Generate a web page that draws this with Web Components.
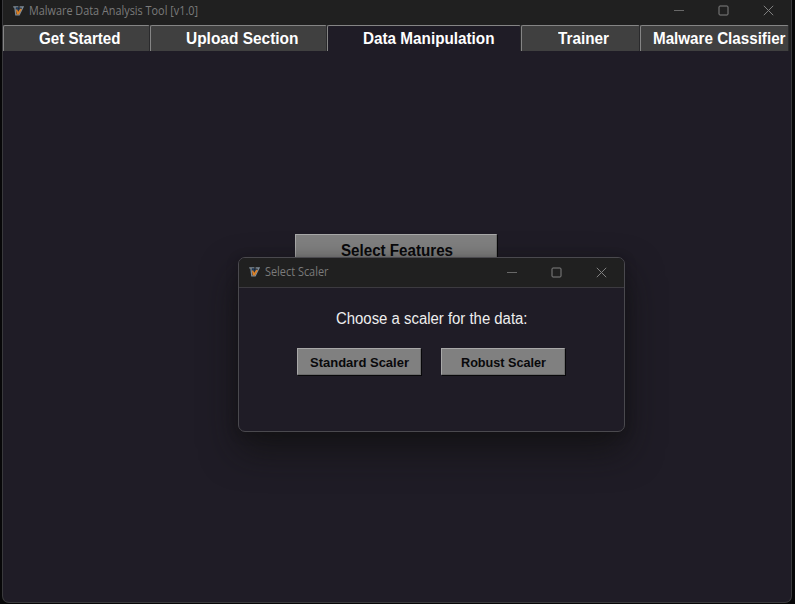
<!DOCTYPE html>
<html lang="en">
<head>
<meta charset="utf-8">
<title>Malware Data Analysis Tool</title>
<style>
html,body{margin:0;height:100%;background:#070708;overflow:hidden}
body{font-family:"Liberation Sans",Arial,sans-serif}
</style>
</head>
<body>
<analysis-app></analysis-app>
<script>
const define = (name, html, setup) => customElements.define(name, class extends HTMLElement {
  connectedCallback() {
    if (this.shadowRoot) return;
    const t = document.createElement('template');
    t.innerHTML = html;
    this.attachShadow({mode: 'open'}).append(t.content.cloneNode(true));
    if (setup) setup(this, this.shadowRoot);
  }
});

/* Single line label, condensed to the width given in pixels. */
define('fit-label', `<style>
:host{display:block;white-space:nowrap;line-height:1.2}
span{display:inline-block;transform-origin:0 50%}
</style><span><slot></slot></span>`, (el, root) => {
  const w = +el.getAttribute('width');
  const s = root.querySelector('span');
  el.style.width = w + 'px';
  s.style.transform = `scaleX(${w / s.getBoundingClientRect().width})`;
});

define('app-logo', `<style>:host{display:block;width:11px;height:10px}svg{display:block}</style>
<svg width="11" height="10" viewBox="0 0 11 10">
<path d="M.2.8h5.2M1.9 1.2l.9 7.7h3.4L10 1H6.6" fill="none" stroke="#7d8b97" stroke-width="1.3"/>
<path d="M3 1.6l.6 5.2L5.2 5l3-3.2H6.6L5.6 3.4 5 1.6z" fill="#1d3c63"/>
<path d="M2.9 3.4l.9 5 2 .2 2.9-5.2-1.4-.8-2.1 3.2-1-2.2z" fill="#dc8126"/>
</svg>`);

define('window-controls', `<style>
:host{display:flex;gap:34px;color:#808080}
svg{display:block;fill:none;stroke:currentColor;stroke-width:1}
</style>
<svg width="11" height="11"><path d="M1 5.5h10" opacity=".75"/></svg>
<svg width="11" height="11"><rect x="1" y="1" width="9" height="9" rx="1"/></svg>
<svg width="11" height="11"><path d="M.8.8l9.4 9.4M10.2.8L.8 10.2"/></svg>`);

define('title-bar', `<style>
:host{display:flex;align-items:center;box-sizing:border-box;background:#202020;color:#7b7b7b;font:12px/1.2 "Open Sans","Noto Sans",sans-serif}
window-controls{margin-left:auto}
</style><app-logo></app-logo><slot></slot><window-controls></window-controls>`);

define('note-tab', `<style>
:host{display:block;box-sizing:border-box;height:26px;padding-top:3px;background:#404040;border-top:1px solid #858585;border-left:1px solid #858585;border-right:1px solid #2a2a2c;border-radius:2px 2px 0 0;color:#fff;font-weight:bold;font-size:16px}
:host([active]){background:#1f1c26}
</style><slot></slot>`);

define('raised-button', `<style>
:host{display:flex;justify-content:center;align-items:center;box-sizing:border-box;background:#808080;border:1px solid;border-color:#a8a8a8 #6b6b6b #6b6b6b #a8a8a8;box-shadow:1px 1px 0 #08080a;color:#09090b;font-weight:bold}
</style><slot></slot>`);

define('scaler-dialog', `<style>
:host{display:block;box-sizing:border-box;width:387px;height:175px;border:1px solid #4a494e;border-radius:7px;overflow:hidden;background:#1f1c26;box-shadow:0 18px 36px rgba(16,16,14,.65),0 2px 12px rgba(12,12,12,.3)}
title-bar{height:30px;padding:0 17px 1px 10px;border-bottom:1px solid #3c3a40}
main{display:grid;justify-items:center;color:#eee;font-size:16px}
.message{margin-top:21px}
.buttons{display:flex;gap:20px;margin-top:20px;padding-right:2px;font-size:13.5px}
raised-button{width:124px;height:27px;padding:2px 0 0 1px}
</style>
<title-bar><fit-label width="63.5" style="margin:0 0 0 5px">Select Scaler</fit-label></title-bar>
<main><fit-label class="message" width="191.5">Choose a scaler for the data:</fit-label>
<div class="buttons"><raised-button><fit-label width="99">Standard Scaler</fit-label></raised-button><raised-button><fit-label width="85">Robust Scaler</fit-label></raised-button></div></main>`);

define('analysis-app', `<style>
:host{display:block;box-sizing:border-box;width:790px;height:603px;margin-left:2px;border:1px solid #39393c;border-top:0;border-radius:0 0 7px 7px;background:#1f1c26;overflow:hidden;position:relative}
.top{height:25px;padding:0 17px 4px 10px}
nav{display:grid;grid-template-columns:147px 177px 194px 119px 149px;background:#202020;width:788px}
note-tab{overflow:hidden}
.content{display:flex;justify-content:center;padding-top:183px;padding-right:2px}
.features{width:202px;height:32px;font-size:16px;padding:1px 0 0 2px}
scaler-dialog{position:absolute;left:235px;top:257px}
</style>
<title-bar class="top"><fit-label width="169" style="margin:1px 0 0 5px">Malware Data Analysis Tool [v1.0]</fit-label></title-bar>
<nav>
<note-tab><fit-label width="81.5" style="margin-left:35px">Get Started</fit-label></note-tab>
<note-tab><fit-label width="112.5" style="margin-left:35px">Upload Section</fit-label></note-tab>
<note-tab active><fit-label width="131.5" style="margin-left:35px">Data Manipulation</fit-label></note-tab>
<note-tab><fit-label width="51" style="margin-left:36px">Trainer</fit-label></note-tab>
<note-tab><fit-label width="132.5" style="margin-left:12px">Malware Classifier</fit-label></note-tab>
</nav>
<section class="content"><raised-button class="features"><fit-label width="112">Select Features</fit-label></raised-button></section>
<scaler-dialog></scaler-dialog>`);
</script>
</body>
</html>
